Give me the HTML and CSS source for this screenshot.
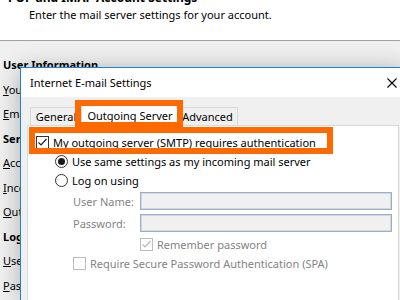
FILE: index.html
```html
<!DOCTYPE html>
<html>
<head>
<meta charset="utf-8">
<link rel="stylesheet" href="styles.css">
</head>
<body>
<div class="win">
  <div class="head">
    <div class="h1">POP and IMAP Account Settings</div>
    <div class="sub">Enter the mail server settings for your account.</div>
  </div>
  <div class="form">
    <div class="lbl b">User Information</div>
    <div class="lbl"><u>Y</u>our Name:</div>
    <div class="lbl"><u>E</u>mail Address:</div>
    <div class="lbl b">Server Information</div>
    <div class="lbl"><u>A</u>ccount Type:</div>
    <div class="lbl"><u>I</u>ncoming mail server:</div>
    <div class="lbl"><u>O</u>utgoing mail server (SMTP):</div>
    <div class="lbl b">Logon Information</div>
    <div class="lbl"><u>U</u>ser Name:</div>
    <div class="lbl"><u>P</u>assword:</div>
  </div>
</div>

<div class="dlg">
  <div class="titlebar">
    <span class="title">Internet E-mail Settings</span>
    <svg class="close" width="10" height="10" viewBox="0 0 10 10"><path d="M0.5 0.5L9.5 9.5M9.5 0.5L0.5 9.5" stroke="#000" stroke-width="1.1" fill="none"/></svg>
  </div>
  <div class="body">
    <div class="tabs">
      <div class="tab t-gen">General</div>
      <div class="tab sel">Outgoing Server</div>
      <div class="tab t-adv">Advanced</div>
    </div>
    <div class="panel">
      <div class="row auth">
        <span class="cb"><svg width="11" height="11" viewBox="0 0 11 11"><path d="M1.5 5.5L4 8L9.5 2" stroke="#222" stroke-width="1.2" fill="none"/></svg></span>
        <span>My outgoing server (SMTP) requires authentication</span>
      </div>
      <div class="row radio-row">
        <span class="rb on"></span>
        <span>Use same settings as my incoming mail server</span>
      </div>
      <div class="row radio-row">
        <span class="rb"></span>
        <span>Log on using</span>
      </div>
      <div class="row field">
        <span class="flabel">User Name:</span>
        <span class="input"></span>
      </div>
      <div class="row field">
        <span class="flabel">Password:</span>
        <span class="input"></span>
      </div>
      <div class="row remember dis">
        <span class="cb off"><svg width="11" height="11" viewBox="0 0 11 11"><path d="M1.5 5.5L4 8L9.5 2" stroke="#b8b8b8" stroke-width="1.2" fill="none"/></svg></span>
        <span>Remember password</span>
      </div>
      <div class="row spa dis">
        <span class="cb off"></span>
        <span>Require Secure Password Authentication (SPA)</span>
      </div>
    </div>
  </div>
  <div class="hl hl-tab"></div>
  <div class="hl hl-auth"></div>
</div>
</body>
</html>
```
FILE: styles.css
```css
html, body {
  margin: 0;
  padding: 0;
}
body {
  width: 400px;
  height: 300px;
  overflow: hidden;
  position: relative;
  background: #f0f0f0;
  font-family: "Noto Sans", "Open Sans", sans-serif;
  font-size: 11px;
  color: #000;
}

/* background window */
.head {
  display: flow-root;
  height: 40px;
  background: #fff;
  border-bottom: 1px solid #a0a0a0;
}
.h1 {
  margin-top: -10px;
  padding-left: 8px;
  font-size: 12px;
  font-weight: bold;
  line-height: 16px;
}
.sub {
  margin-top: 1px;
  padding-left: 29px;
  line-height: 15px;
}
.form {
  padding: 12px 0 0 3px;
}
.lbl {
  height: 24.5px;
  line-height: 24.5px;
  white-space: nowrap;
}
.lbl.b {
  font-weight: bold;
}

/* dialog */
.dlg {
  position: absolute;
  left: 20px;
  top: 67px;
  width: 384px;
  height: 232px;
  overflow: hidden;
  border: 1px solid #1883d7;
  border-bottom: 0;
  background: #f0f0f0;
  box-shadow: 0 2px 22px rgba(0, 0, 0, 0.28);
}
.titlebar {
  height: 29px;
  background: #fff;
  display: flex;
  align-items: center;
  justify-content: space-between;
  padding: 0 8px 0 9px;
}
.close {
  display: block;
}
.body {
  padding: 10px 6px 0 6px;
}
.tabs {
  display: flex;
  align-items: flex-end;
  padding-left: 3px;
  height: 18px;
}
.tab {
  box-sizing: border-box;
  height: 18px;
  border: 1px solid #d9d9d9;
  border-bottom: 0;
  background: #f0f0f0;
  text-align: center;
  line-height: 17px;
  white-space: nowrap;
}
.t-gen {
  width: 51px;
  border-right: 0;
}
.tab.sel {
  width: 97px;
  height: 21px;
  margin-bottom: -1px;
  background: #fff;
  position: relative;
  z-index: 1;
  line-height: 19px;
  padding-left: 1px;
}
.t-adv {
  width: 60px;
  border-left: 0;
}
.panel {
  height: 200px;
  background: #fff;
  border: 1px solid #d9d9d9;
  padding: 7px 0 0 8px;
}
.row {
  display: flex;
  align-items: center;
  height: 19px;
  white-space: nowrap;
}
.cb {
  box-sizing: border-box;
  width: 13px;
  height: 13px;
  border: 1px solid #333;
  background: #fff;
  margin-right: 4px;
  display: flex;
  align-items: center;
  justify-content: center;
  flex: none;
}
.cb svg {
  display: block;
}
.cb.off {
  border-color: #bcbcbc;
}
.rb {
  box-sizing: border-box;
  width: 13px;
  height: 13px;
  border: 1px solid #333;
  border-radius: 50%;
  background: #fff;
  margin-right: 4px;
  display: flex;
  align-items: center;
  justify-content: center;
  flex: none;
}
.rb.on::after {
  content: "";
  width: 7px;
  height: 7px;
  border-radius: 50%;
  background: #1a1a1a;
}
.radio-row {
  padding-left: 19px;
}
.field {
  height: 22px;
  padding-left: 37px;
  color: #838383;
}
.flabel {
  width: 67px;
  flex: none;
}
.input {
  box-sizing: border-box;
  flex: 1;
  height: 18px;
  margin-right: 6px;
  background: #f0f0f0;
  border: 1px solid #a3acba;
  box-shadow: inset 0 0 0 1px #cad8ea;
}
.dis {
  color: #838383;
}
.remember {
  height: 21px;
  padding-left: 104px;
}
.spa {
  height: 17px;
  padding-left: 37px;
}

/* orange annotation boxes */
.hl {
  position: absolute;
  box-sizing: border-box;
  border: 6px solid #ff6a00;
  z-index: 2;
}
.hl-tab {
  left: 54px;
  top: 32px;
  width: 108px;
  height: 28px;
}
.hl-auth {
  left: 8px;
  top: 59px;
  width: 304px;
  height: 27px;
}
```
